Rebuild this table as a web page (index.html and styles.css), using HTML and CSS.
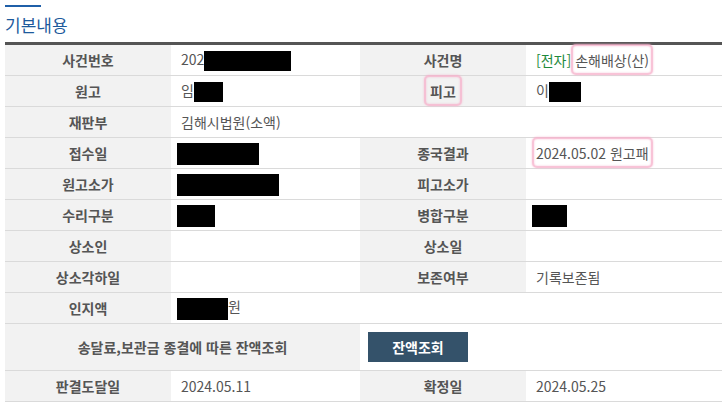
FILE: index.html
```html
<!DOCTYPE html>
<html lang="ko">
  <head>
    <meta charset="UTF-8" />
    <meta name="viewport" content="width=device-width, initial-scale=1.0" />
    <title>기본내용</title>
    <link rel="stylesheet" href="styles.css">
  </head>
  <body>
    <div class="section">
      <div class="title-bar"></div>
      <h2 class="section-title">기본내용</h2>

      <table class="info-table">
        <colgroup>
          <col class="col-label" />
          <col class="col-value1" />
          <col class="col-label" />
          <col class="col-value2" />
        </colgroup>
        <tr>
          <th>사건번호</th>
          <td>202<span class="redact" style="width: 87px"></span></td>
          <th>사건명</th>
          <td><span class="tag">[전자]</span> <span class="mark">손해배상(산)</span></td>
        </tr>
        <tr>
          <th>원고</th>
          <td>임<span class="redact" style="width: 29px"></span></td>
          <th><span class="mark wide">피고</span></th>
          <td>이<span class="redact" style="width: 32px"></span></td>
        </tr>
        <tr>
          <th>재판부</th>
          <td colspan="3">김해시법원(소액)</td>
        </tr>
        <tr>
          <th>접수일</th>
          <td><span class="redact first" style="width: 82px"></span></td>
          <th>종국결과</th>
          <td><span class="mark">2024.05.02 원고패</span></td>
        </tr>
        <tr>
          <th>원고소가</th>
          <td><span class="redact first" style="width: 102px"></span></td>
          <th>피고소가</th>
          <td></td>
        </tr>
        <tr>
          <th>수리구분</th>
          <td><span class="redact first" style="width: 38px"></span></td>
          <th>병합구분</th>
          <td><span class="redact first" style="width: 35px"></span></td>
        </tr>
        <tr>
          <th>상소인</th>
          <td></td>
          <th>상소일</th>
          <td></td>
        </tr>
        <tr>
          <th>상소각하일</th>
          <td></td>
          <th>보존여부</th>
          <td>기록보존됨</td>
        </tr>
        <tr>
          <th>인지액</th>
          <td><span class="redact first" style="width: 51px"></span>원</td>
          <td colspan="2"></td>
        </tr>
        <tr class="tall">
          <th colspan="2">송달료,보관금 종결에 따른 잔액조회</th>
          <td colspan="2" class="btn-cell"><button class="btn">잔액조회</button></td>
        </tr>
        <tr>
          <th>판결도달일</th>
          <td>2024.05.11</td>
          <th>확정일</th>
          <td>2024.05.25</td>
        </tr>
      </table>
    </div>
  </body>
</html>
```

FILE: styles.css
```css
body {
  margin: 0;
  background: #fff;
  font-family: "Noto Sans CJK KR", "Noto Sans", sans-serif;
  color: #555;
}
.section {
  padding: 5px 3px 0 5px;
}
.title-bar {
  width: 36px;
  height: 2px;
  background: #1f5fa8;
}
.section-title {
  margin: 8px 0 7px;
  font-size: 17px;
  line-height: 20px;
  font-weight: 400;
  color: #1d5a9c;
}
.info-table {
  width: 717px;
  border-collapse: collapse;
  table-layout: fixed;
  border-top: 3px solid #555;
  font-size: 14px;
}
.col-label {
  width: 166px;
}
.col-value1 {
  width: 189px;
}
.col-value2 {
  width: 196px;
}
.info-table th,
.info-table td {
  height: 30px;
  padding: 0 10px;
  border-bottom: 1px solid #dadada;
  line-height: 20px;
  white-space: nowrap;
}
.info-table th {
  background: #f2f2f2;
  text-align: center;
  font-weight: 700;
  color: #555;
}
.info-table td {
  background: #fff;
  text-align: left;
  color: #555;
}
.info-table tr.tall th,
.info-table tr.tall td {
  height: 46px;
}
.btn-cell {
  padding-left: 8px !important;
}
.btn {
  width: 100px;
  height: 30px;
  border: 0;
  background: #34526a;
  color: #fff;
  font-family: inherit;
  font-size: 14px;
  font-weight: 700;
  cursor: pointer;
}
.redact {
  display: inline-block;
  height: 20px;
  background: #000;
  vertical-align: middle;
}
.redact.first {
  margin-left: -4px;
  height: 22px;
}
.tag {
  color: #1e8a3c;
}
.mark {
  position: relative;
}
.mark::after {
  content: "";
  position: absolute;
  top: -6px;
  bottom: -5px;
  left: -4px;
  right: -4px;
  border: 2px solid rgba(246, 175, 202, 0.75);
  border-radius: 5px;
  box-shadow: 0 0 2px rgba(246, 175, 202, 0.8), inset 0 0 2px rgba(246, 175, 202, 0.8);
}
.mark.wide::after {
  left: -6px;
  right: -6px;
}
```
